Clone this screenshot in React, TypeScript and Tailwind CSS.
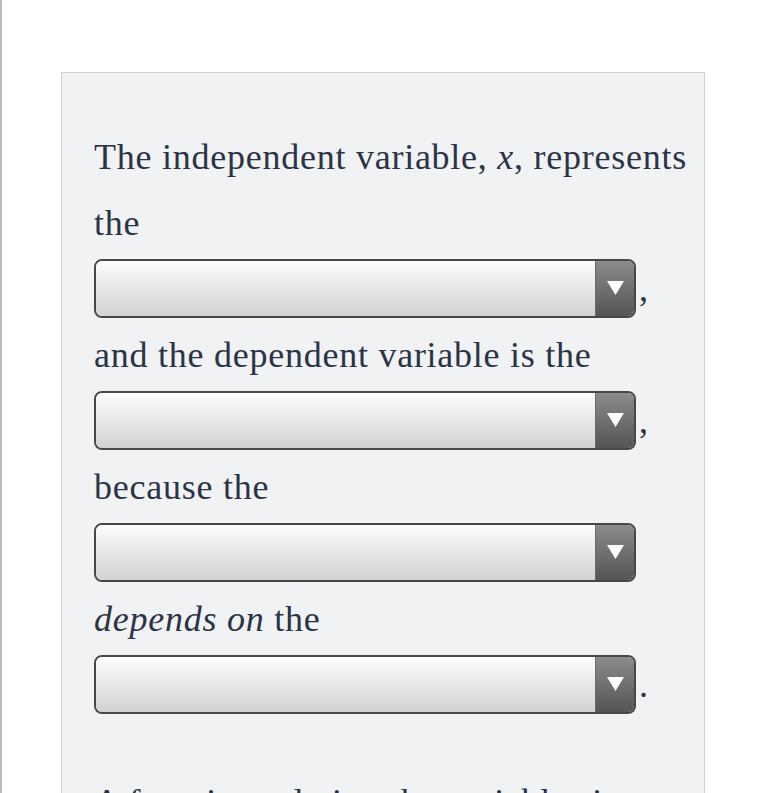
const Select = ({ punct }: { punct?: string }) => (
  <div className="flex h-[66px] items-center">
    <div className="-mt-[2px] flex h-[59px] w-[542px] overflow-hidden rounded-[8px] border-2 border-[#484848]">
      <div className="flex-1 bg-gradient-to-b from-[#fdfdfd] to-[#d2d2d2]" />
      <div className="flex w-[39px] items-center justify-center border-l border-[#6a6a6a] bg-gradient-to-b from-[#8c8c8c] to-[#555555]">
        <svg width="17" height="14" viewBox="0 0 17 14">
          <path d="M0 0h17L8.5 14z" fill="#fff" />
        </svg>
      </div>
    </div>
    {punct && <span className="ml-[3px]">{punct}</span>}
  </div>
)

const Line = ({ children }: { children: React.ReactNode }) => (
  <div className="h-[66px] leading-[66px] whitespace-nowrap">{children}</div>
)

export default function App() {
  return (
    <div className="h-[793px] overflow-hidden border-l-2 border-[#b8b8b8] bg-white">
      <div className="pt-[72px] pl-[59px]">
        <div
          className="w-[644px] border border-[#cfd1d4] bg-[#f1f2f4] pl-[32px] pt-[51px] text-[36px] tracking-[0.75px] text-[#2b3346]"
          style={{ fontFamily: '"Liberation Serif", Georgia, serif' }}
        >
          <Line>
            The independent variable, <i>x</i>, represents
          </Line>
          <Line>the</Line>
          <Select punct="," />
          <Line>and the dependent variable is the</Line>
          <Select punct="," />
          <Line>because the</Line>
          <Select />
          <Line>
            <i>depends on</i> the
          </Line>
          <Select punct="." />
          <div className="mt-[51px]">
            <Line>A function relating the variables is</Line>
          </div>
        </div>
      </div>
    </div>
  )
}
